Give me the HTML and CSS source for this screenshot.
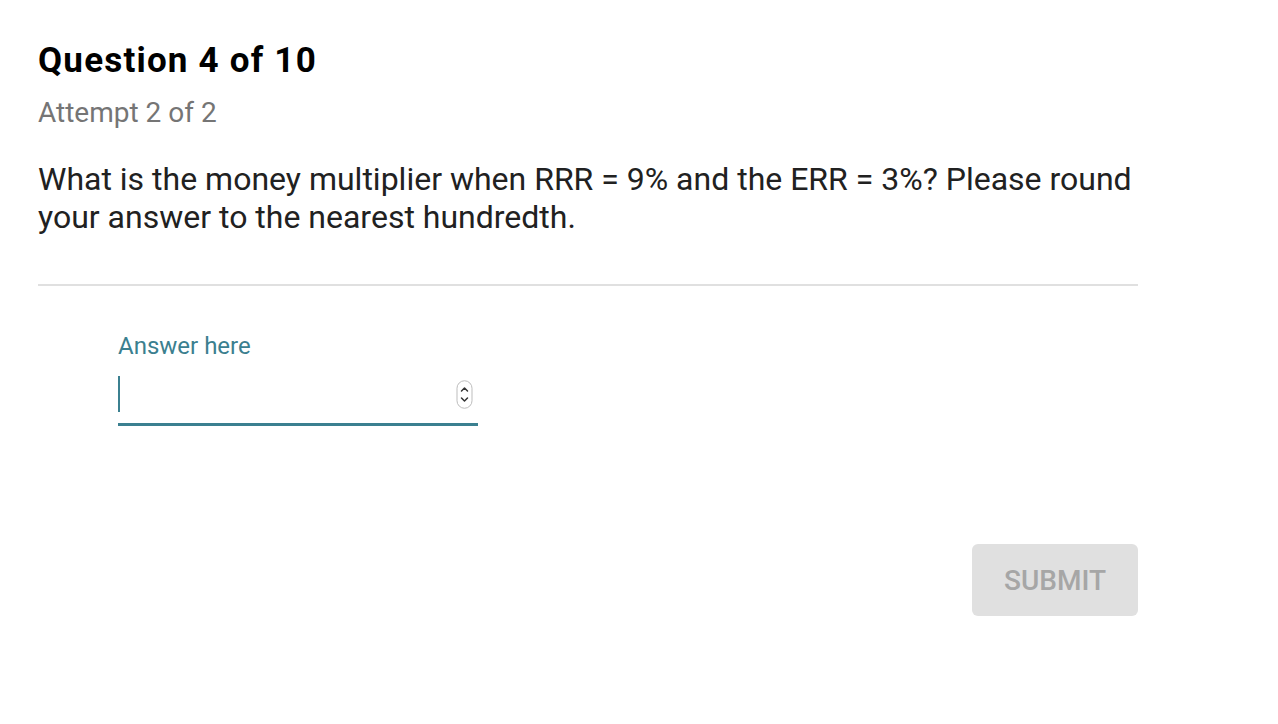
FILE: index.html
```html
<!DOCTYPE html>
<html lang="en">
<head>
<meta charset="utf-8">
<title>Question 4 of 10</title>
<link rel="stylesheet" href="styles.css">
</head>
<body>
<main class="quiz">
  <header class="quiz-head">
    <h1 class="quiz-title">Question 4 of 10</h1>
    <p class="quiz-attempt">Attempt 2 of 2</p>
  </header>
  <p class="quiz-question">What is the money multiplier when RRR = 9% and the ERR = 3%? Please round your answer to the nearest hundredth.</p>
  <hr class="quiz-divider">
  <section class="answer">
    <label class="answer-label" for="ans">Answer here</label>
    <div class="answer-field">
      <span class="answer-caret"></span>
      <input id="ans" class="answer-input" type="text" aria-label="Answer here">
      <svg class="answer-spin" width="17" height="29" viewBox="0 0 17 29" aria-hidden="true">
        <rect x="1" y="0.75" width="15" height="27.5" rx="7.5" fill="#fff" stroke="#bdbdbd" stroke-width="1"/>
        <path d="M5.5 11 L8.5 8 L11.5 11" fill="none" stroke="#333" stroke-width="1.5" stroke-linecap="round" stroke-linejoin="round"/>
        <path d="M5.5 18 L8.5 21 L11.5 18" fill="none" stroke="#333" stroke-width="1.5" stroke-linecap="round" stroke-linejoin="round"/>
      </svg>
    </div>
  </section>
  <div class="actions">
    <button class="submit" type="button" disabled>SUBMIT</button>
  </div>
</main>
</body>
</html>
```
FILE: styles.css
```css
html, body {
  margin: 0;
  padding: 0;
  background: #fff;
}
body {
  font-family: Roboto, "Liberation Sans", Arial, sans-serif;
  color: #212121;
}
.quiz {
  width: 1100px;
  padding: 41px 0 0 38px;
}
.quiz-title {
  margin: 0;
  font-size: 35px;
  font-weight: 700;
  letter-spacing: 1.2px;
  line-height: 40px;
  color: #000;
}
.quiz-attempt {
  margin: 16px 0 0;
  font-size: 28px;
  line-height: 32px;
  color: #757575;
}
.quiz-question {
  margin: 31px 0 0;
  font-size: 32px;
  line-height: 38px;
  color: #212121;
}
.quiz-divider {
  margin: 48px 0 0;
  border: 0;
  height: 2px;
  background: #e0e0e0;
}
.answer {
  margin: 47px 0 0 80px;
  width: 360px;
}
.answer-label {
  display: block;
  font-size: 24px;
  line-height: 26px;
  color: #3b7f8f;
}
.answer-field {
  margin-top: 14px;
  height: 50px;
  border-bottom: 3px solid #3b8090;
  display: flex;
  align-items: center;
}
.answer-caret {
  width: 2px;
  height: 36px;
  background: #3b8090;
  margin-bottom: 8px;
}
.answer-input {
  flex: 1;
  border: 0;
  outline: none;
  background: transparent;
  font: inherit;
  font-size: 24px;
  padding: 0;
  height: 36px;
  margin-bottom: 8px;
}
.answer-spin {
  margin: 0 5px 8px 0;
}
.actions {
  display: flex;
  justify-content: flex-end;
  margin-top: 118px;
}
.submit {
  width: 166px;
  height: 72px;
  border: 0;
  border-radius: 6px;
  background: #e0e0e0;
  color: #a6a6a6;
  font-family: Roboto, "Liberation Sans", Arial, sans-serif;
  font-size: 28px;
  font-weight: 500;
  padding: 0;
}
```
